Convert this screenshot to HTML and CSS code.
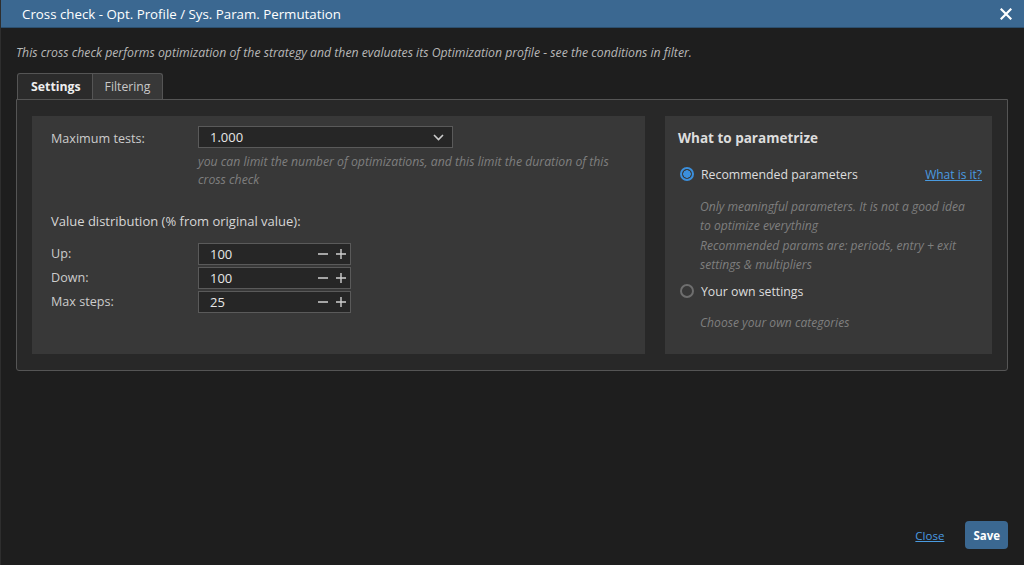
FILE: index.html
```html
<!DOCTYPE html>
<html lang="en">
<head>
    <meta charset="UTF-8">
    <meta name="viewport" content="width=device-width, initial-scale=1.0">
    <title>Cross check - Opt. Profile / Sys. Param. Permutation</title>
    <link rel="stylesheet" href="styles.css">
</head>
<body>
    <div class="dialog">
        <div class="titlebar">
            <span class="title">Cross check - Opt. Profile / Sys. Param. Permutation</span>
            <button class="close-x" aria-label="Close">
                <svg width="12" height="12" viewBox="0 0 12 12">
                    <path d="M1.5 1.5 L10.5 10.5 M10.5 1.5 L1.5 10.5" stroke="#fff" stroke-width="2.2" stroke-linecap="square"/>
                </svg>
            </button>
        </div>

        <div class="content">
            <p class="intro">This cross check performs optimization of the strategy and then evaluates its Optimization profile - see the conditions in filter.</p>

            <div class="tabs">
                <div class="tab active">Settings</div>
                <div class="tab">Filtering</div>
            </div>

            <div class="tab-panel">
                <div class="card card-main">
                    <div class="form-row">
                        <label class="label">Maximum tests:</label>
                        <div class="field">
                            <div class="select">
                                <span>1.000</span>
                                <svg width="11" height="7" viewBox="0 0 11 7">
                                    <path d="M1 1 L5.5 5.5 L10 1" fill="none" stroke="#ccc" stroke-width="1.6"/>
                                </svg>
                            </div>
                            <div class="hint">you can limit the number of optimizations, and this limit the duration of this cross check</div>
                        </div>
                    </div>

                    <div class="section-title">Value distribution (% from original value):</div>

                    <div class="step-rows">
                        <div class="step-row">
                            <label class="label">Up:</label>
                            <div class="stepper">
                                <span class="value">100</span>
                                <svg class="ctl" width="30" height="12" viewBox="0 0 30 12"><path d="M1 6 H11 M19 6 H29 M24 1 V11" stroke="#cfcfcf" stroke-width="1.4"/></svg>
                            </div>
                        </div>
                        <div class="step-row">
                            <label class="label">Down:</label>
                            <div class="stepper">
                                <span class="value">100</span>
                                <svg class="ctl" width="30" height="12" viewBox="0 0 30 12"><path d="M1 6 H11 M19 6 H29 M24 1 V11" stroke="#cfcfcf" stroke-width="1.4"/></svg>
                            </div>
                        </div>
                        <div class="step-row">
                            <label class="label">Max steps:</label>
                            <div class="stepper">
                                <span class="value">25</span>
                                <svg class="ctl" width="30" height="12" viewBox="0 0 30 12"><path d="M1 6 H11 M19 6 H29 M24 1 V11" stroke="#cfcfcf" stroke-width="1.4"/></svg>
                            </div>
                        </div>
                    </div>
                </div>

                <div class="card card-side">
                    <div class="card-title">What to parametrize</div>

                    <div class="radio-row">
                        <span class="radio checked"></span>
                        <span class="radio-label">Recommended parameters</span>
                        <a class="link" href="#">What is it?</a>
                    </div>
                    <div class="radio-hint">
                        Only meaningful parameters. It is not a good idea to optimize everything<br>
                        Recommended params are: periods, entry + exit settings &amp; multipliers
                    </div>

                    <div class="radio-row">
                        <span class="radio"></span>
                        <span class="radio-label">Your own settings</span>
                    </div>
                    <div class="radio-hint second">Choose your own categories</div>
                </div>
            </div>
        </div>

        <div class="footer">
            <a class="link close-link" href="#">Close</a>
            <button class="btn-save">Save</button>
        </div>
    </div>
</body>
</html>
```

FILE: styles.css
```css
body {
    margin: 0;
    font-family: "Open Sans", sans-serif;
    background-color: #1e1e1e;
    color: #ddd;
}

.dialog {
    height: 565px;
    display: flex;
    flex-direction: column;
    box-sizing: border-box;
    border-left: 1px solid #2e2e2e;
}

.titlebar {
    height: 28px;
    background-color: #3b6891;
    display: flex;
    align-items: center;
    justify-content: space-between;
    padding: 0 12px 0 21px;
    border-bottom: 1px solid #2c4f6e;
    box-sizing: border-box;
}

.title {
    color: #fff;
    font-size: 13.3px;
}

.close-x {
    background: none;
    border: none;
    padding: 0;
    display: flex;
    cursor: pointer;
}

.content {
    flex: 1;
    padding: 16px 15px 0 15px;
}

.intro {
    margin: 0 0 11px 0;
    font-size: 12.25px;
    line-height: 18px;
    font-style: italic;
    color: #b8b8b8;
}

.tabs {
    display: flex;
    padding-left: 1px;
}

.tab {
    height: 26px;
    box-sizing: border-box;
    padding: 0 12px;
    font-size: 12.2px;
    line-height: 25px;
    color: #c8c8c8;
    background-color: #383838;
    border: 1px solid #555;
    border-bottom: none;
    border-left: none;
    border-radius: 0 3px 0 0;
}

.tab.active {
    background-color: #2b2b2b;
    color: #eee;
    font-weight: bold;
    font-size: 12.3px;
    border-left: 1px solid #555;
    border-radius: 3px 0 0 0;
    padding: 0 11px 0 13px;
}

.tab-panel {
    display: flex;
    gap: 20px;
    padding: 16px 15px;
    background-color: #282828;
    border: 1px solid #555;
    border-radius: 0 0 3px 3px;
    width: 992px;
    box-sizing: border-box;
}

.card {
    background-color: #383838;
    box-sizing: border-box;
    height: 238px;
}

.card-main {
    flex: 1;
    min-width: 0;
    padding: 10px 19px;
}

.card-side {
    width: 327px;
    flex-shrink: 0;
    padding: 12px 10px 12px 13px;
}

.form-row {
    display: flex;
}

.label {
    width: 147px;
    flex-shrink: 0;
    font-size: 12.6px;
    color: #ccc;
    line-height: 22px;
}

.form-row .label {
    line-height: 26px;
}

.select {
    width: 255px;
    height: 22px;
    box-sizing: border-box;
    background-color: #262626;
    border: 1px solid #5a5a5a;
    display: flex;
    align-items: center;
    justify-content: space-between;
    padding: 0 8px 0 11px;
    font-size: 13px;
    color: #e6e6e6;
}

.hint {
    width: 420px;
    margin-top: 5px;
    font-size: 12.25px;
    line-height: 18px;
    font-style: italic;
    color: #7f7f7f;
}

.section-title {
    margin-top: 22px;
    font-size: 13px;
    color: #d6d6d6;
    line-height: 20px;
}

.step-rows {
    margin-top: 12px;
    display: flex;
    flex-direction: column;
    gap: 2px;
}

.step-row {
    display: flex;
    align-items: center;
}

.stepper {
    width: 153px;
    height: 22px;
    box-sizing: border-box;
    background-color: #262626;
    border: 1px solid #5a5a5a;
    display: flex;
    align-items: center;
    padding: 0 3px 0 11px;
    font-size: 13px;
    color: #e6e6e6;
}

.stepper .value {
    flex: 1;
}

.card-title {
    font-size: 13.5px;
    font-weight: bold;
    color: #ddd;
    line-height: 20px;
}

.radio-row {
    display: flex;
    align-items: center;
    margin-top: 16px;
    height: 20px;
}

.radio {
    width: 10px;
    height: 10px;
    border: 2px solid #6e6e6e;
    border-radius: 50%;
    margin: 0 7px 0 2px;
    box-sizing: content-box;
    flex-shrink: 0;
}

.radio.checked {
    border-color: #3b8fdc;
    background: radial-gradient(circle, #3b8fdc 0 3.5px, transparent 4px);
}

.radio-label {
    flex: 1;
    font-size: 12.3px;
    color: #ddd;
}

.link {
    color: #4a9be0;
    font-size: 12px;
    text-decoration: underline;
}

.close-link {
    font-size: 11.5px;
}

.radio-hint {
    padding-left: 22px;
    margin-top: 13px;
    font-size: 12.1px;
    line-height: 19.3px;
    font-style: italic;
    color: #7f7f7f;
    width: 272px;
}

.radio-hint.second {
    margin-top: 12px;
}

.radio-row + .radio-hint + .radio-row {
    margin-top: 7px;
}

.footer {
    display: flex;
    justify-content: flex-end;
    align-items: center;
    gap: 21px;
    padding: 0 16px 16px 0;
}

.btn-save {
    height: 28px;
    padding: 0 8px;
    border: none;
    border-radius: 4px;
    background-color: #3b6891;
    color: #fff;
    font-family: "Open Sans", sans-serif;
    font-weight: bold;
    font-size: 11.5px;
    cursor: pointer;
}
```
